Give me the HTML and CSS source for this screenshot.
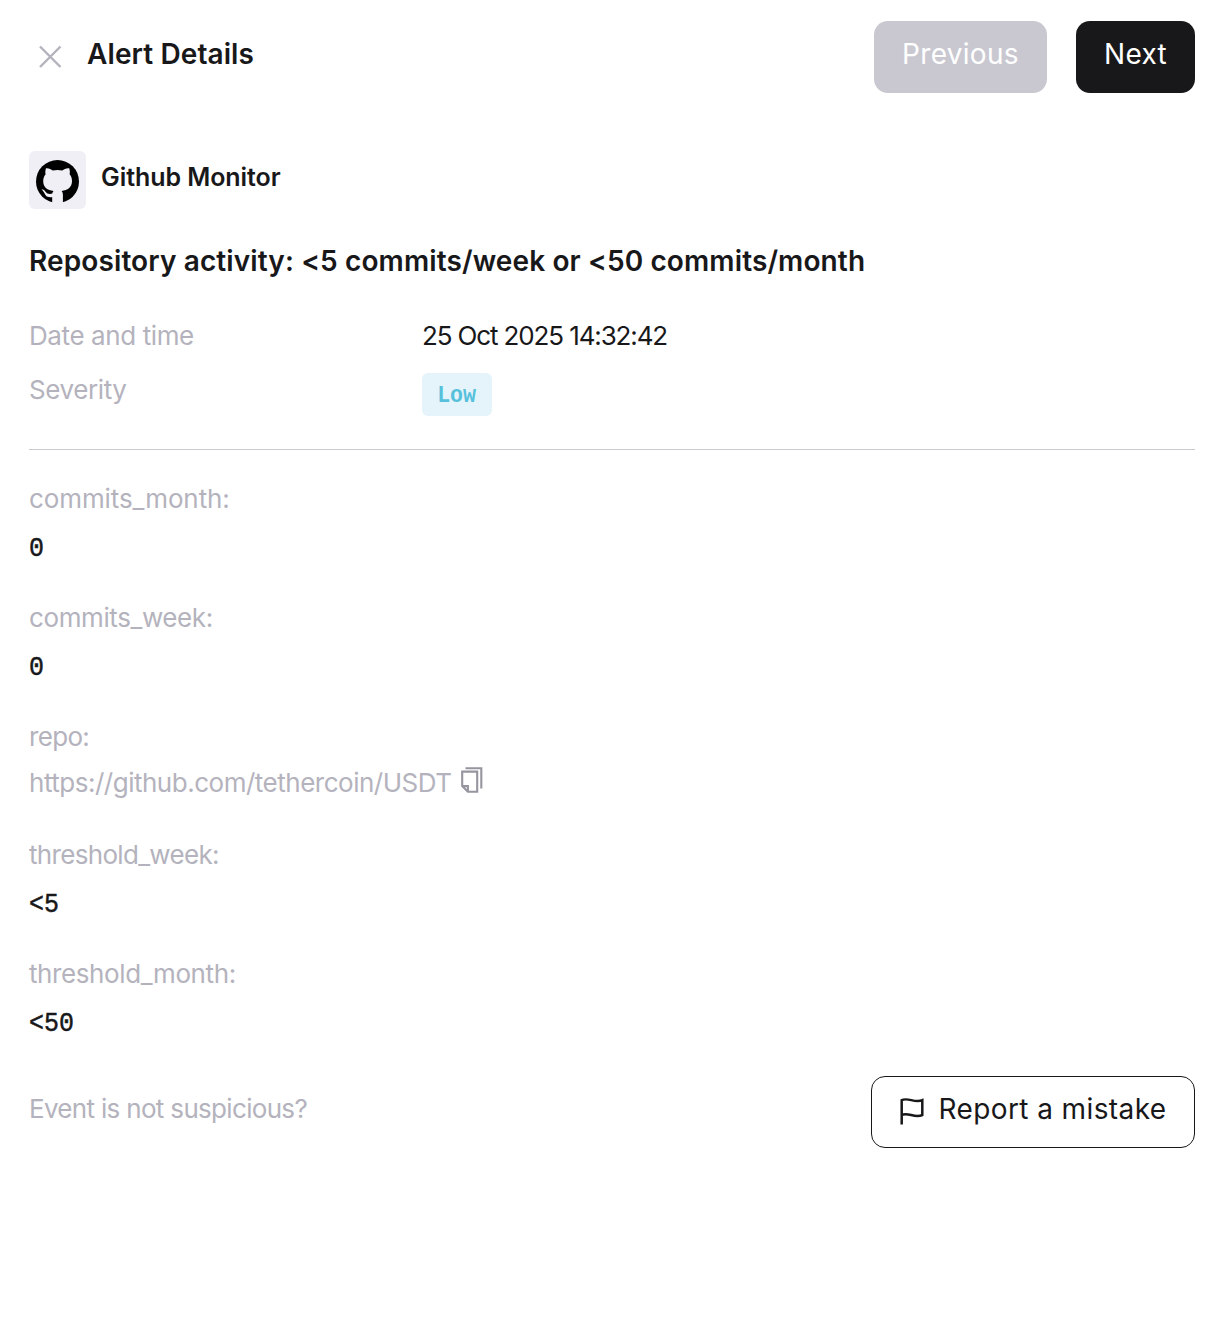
FILE: index.html
```html
<!DOCTYPE html>
<html lang="en">
<head>
<meta charset="utf-8">
<title>Alert Details</title>
<link rel="stylesheet" href="styles.css">
</head>
<body>
<main class="panel">
  <header class="header">
    <button class="close" aria-label="Close"><svg width="24" height="24" viewBox="0 0 24 24"><path d="M2 1.500l20.500 20.500M22.500 1.500L2 22" fill="none" stroke="currentColor" stroke-width="2.400"/></svg></button>
    <h1 class="header-title">Alert Details</h1>
    <nav class="nav">
      <button class="button button-disabled" disabled>Previous</button>
      <button class="button button-dark">Next</button>
    </nav>
  </header>
  <section class="source">
    <span class="source-logo"><svg width="43" height="43" viewBox="0 0 43 43"><circle cx="21.500" cy="21.500" r="21.500" fill="#000"/><g fill="#f0eff5"><path d="M10 8.200C12.500 7.800 15 9.200 16.800 10.400Q21.500 9.500 26.200 10.400C28 9.200 30.500 7.800 33.200 8.200C34 10.500 34 12.500 33.600 14.200C35.400 16.300 36 18.500 36 21C36 27.500 31.500 30.200 25.600 31C26.600 32.100 26.900 33.500 26.900 35V43H16.200V35C16.200 33.500 16.500 32.100 17.500 31C11.500 30.200 7.200 27.500 7.200 21C7.200 18.500 8 16.300 9.600 14.200C9.200 12.500 9.200 10.500 10 8.200Z"/><path d="M5.500 29.300C9 29.300 9.200 32.500 11.500 33.500C13 34.200 15 34 17 33.500V37C14 37.600 11 37.300 9.600 35.300C8.500 33.200 7.500 31.100 5.500 29.300Z"/></g></svg></span>
    <span class="source-name">Github Monitor</span>
  </section>
  <h2 class="title">Repository activity: &lt;5 commits/week or &lt;50 commits/month</h2>
  <dl class="meta">
    <dt class="label">Date and time</dt><dd class="value">25 Oct 2025 14:32:42</dd>
    <dt class="label">Severity</dt><dd><span class="badge"><span class="badge-text">Low</span></span></dd>
  </dl>
  <dl class="fields">
    <div class="field"><dt class="label label-wide">commits_month:</dt><dd class="mono">0</dd></div>
    <div class="field"><dt class="label">commits_week:</dt><dd class="mono">0</dd></div>
    <div class="field field-link"><dt class="label label-tight">repo:</dt><dd class="link">https://github.com/tethercoin/USDT<svg class="copy" width="22" height="26" viewBox="0 0 22 26"><path d="M4.500 1.200h15.800v20.300M1.200 4.600h15v20.200H6.900L1.200 19.100zM1.200 19.100h5.700v5.700" fill="none" stroke="currentColor" stroke-width="2.100"/></svg></dd></div>
    <div class="field"><dt class="label label-tight">threshold_week:</dt><dd class="mono">&lt;5</dd></div>
    <div class="field"><dt class="label">threshold_month:</dt><dd class="mono">&lt;50</dd></div>
  </dl>
  <footer class="footer">
    <span class="label label-tight">Event is not suspicious?</span>
    <button class="button button-outline"><svg class="flag" width="24" height="28" viewBox="0 0 24 28"><path d="M1.700 27.500V3.200C8-.1 14.500 6.500 22.300 3.200V18C14.500 21.700 8 14.500 1.700 18" fill="none" stroke="currentColor" stroke-width="2.500"/></svg>Report a mistake</button>
  </footer>
</main>
</body>
</html>
```
FILE: styles.css
```css
* { box-sizing: border-box; margin: 0; }
body { background: #fff; color: #18181a; font: 400 26px/36px Inter, sans-serif; }
button { font: inherit; border: 0; background: none; padding: 0; color: inherit; }
.panel { padding: 21px 29px 0; }
.header { display: flex; align-items: center; height: 72px; }
.close { display: flex; width: 43px; padding: 0 9px; color: #b4b3bd; }
.header-title { margin: -6px auto 0 15px; font-size: 28px; font-weight: 600; letter-spacing: .1px; }
.nav { display: flex; gap: 29px; }
.button { display: flex; align-items: center; justify-content: center; height: 72px; padding-bottom: 6px; border-radius: 14px; font-size: 28px; letter-spacing: .3px; }
.button-disabled { width: 173px; color: #fff; background: #c9c8d1; }
.button-dark { width: 119px; color: #fff; background: #18181a; }
.source { display: flex; align-items: center; gap: 15px; margin-top: 58px; height: 58px; }
.source-logo { display: flex; align-items: center; justify-content: center; width: 57px; height: 58px; padding-top: 2px; border-radius: 6px; background: #f0eff5; }
.source-name { font-size: 25px; font-weight: 600; letter-spacing: -.07px; margin-top: -6px; }
.title { margin-top: 34px; font-size: 28px; font-weight: 600; letter-spacing: .115px; }
.meta { display: grid; grid-template-columns: 393px 1fr; margin-top: 39px; height: 132px; grid-template-rows: 54px 1fr; border-bottom: 1px solid #cbcace; }
.label { color: #b4b3bd; letter-spacing: -.4px; }
.label-wide { letter-spacing: -.1px; }
.label-tight { letter-spacing: -.68px; }
.value { letter-spacing: -1.13px; }
.badge { display: flex; align-items: center; justify-content: center; width: 70px; height: 43px; margin-top: 1px; padding-top: 2px; border-radius: 6px; color: #57c1dc; background: #e5f4fa; font: 700 24px/1 "Liberation Mono", monospace; }
.badge-text { transform: scaleX(.9); }
.fields { display: flex; flex-direction: column; margin-top: 31px; }
.field { height: 119px; }
.field-link { height: 118px; }
.mono { margin-top: 14px; font: 400 28px/36px "Liberation Mono", monospace; -webkit-text-stroke: .5px currentColor; transform: scaleX(.89); transform-origin: left; }
.link { display: flex; gap: 9px; margin-top: 10px; color: #b4b3bd; letter-spacing: -.49px; }
.copy { color: #96959f; margin-top: 2px; }
.footer { display: flex; justify-content: space-between; margin-top: 1px; }
.footer .label { margin-top: 15px; }
.button-outline { width: 324px; border: 1px solid #18181a; letter-spacing: .4px; }
.flag { margin: 3px 14px 0 1px; }
```
